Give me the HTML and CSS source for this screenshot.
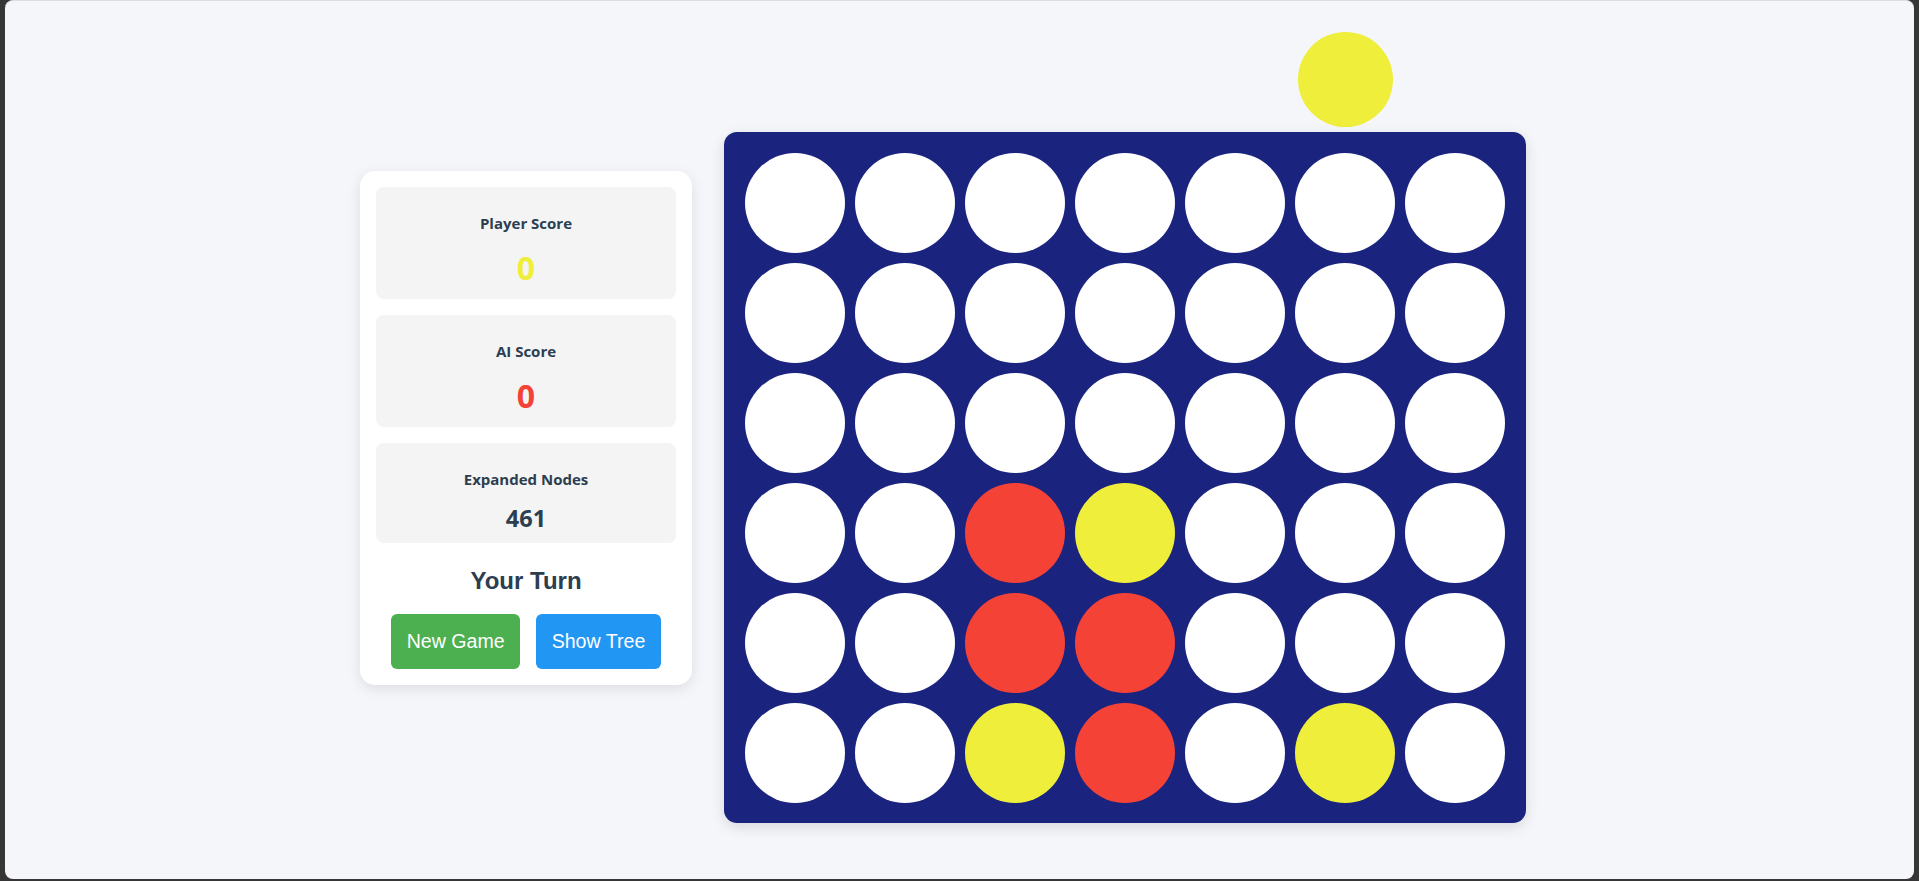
FILE: index.html
```html
<!DOCTYPE html>
<html lang="en">
<head>
<meta charset="utf-8">
<title>Connect Four</title>
<link rel="stylesheet" href="styles.css">
</head>
<body>
<div class="window">
  <main class="game">
    <aside class="panel">
      <div class="stat">
        <div class="stat-label">Player Score</div>
        <div class="stat-value score player">0</div>
      </div>
      <div class="stat">
        <div class="stat-label">AI Score</div>
        <div class="stat-value score ai">0</div>
      </div>
      <div class="stat">
        <div class="stat-label">Expanded Nodes</div>
        <div class="stat-value nodes">461</div>
      </div>
      <h2 class="turn">Your Turn</h2>
      <div class="buttons">
        <button class="btn btn-green">New Game</button>
        <button class="btn btn-blue">Show Tree</button>
      </div>
    </aside>
    <section class="board-wrap">
      <div class="hover-row">
        <span></span><span></span><span></span><span></span><span></span>
        <span class="hover-disc"></span>
        <span></span>
      </div>
      <div class="board">
        <div class="cell"></div><div class="cell"></div><div class="cell"></div><div class="cell"></div><div class="cell"></div><div class="cell"></div><div class="cell"></div>
        <div class="cell"></div><div class="cell"></div><div class="cell"></div><div class="cell"></div><div class="cell"></div><div class="cell"></div><div class="cell"></div>
        <div class="cell"></div><div class="cell"></div><div class="cell"></div><div class="cell"></div><div class="cell"></div><div class="cell"></div><div class="cell"></div>
        <div class="cell"></div><div class="cell"></div><div class="cell red"></div><div class="cell yellow"></div><div class="cell"></div><div class="cell"></div><div class="cell"></div>
        <div class="cell"></div><div class="cell"></div><div class="cell red"></div><div class="cell red"></div><div class="cell"></div><div class="cell"></div><div class="cell"></div>
        <div class="cell"></div><div class="cell"></div><div class="cell yellow"></div><div class="cell red"></div><div class="cell"></div><div class="cell yellow"></div><div class="cell"></div>
      </div>
    </section>
  </main>
</div>
</body>
</html>
```
FILE: styles.css
```css
* { box-sizing: border-box; }

html, body {
  margin: 0;
  height: 100%;
}

body {
  background: #363636;
  padding: 0 5px 2px 5px;
  font-family: "Open Sans", "Noto Sans", sans-serif;
  color: #2c3e50;
}

.window {
  height: 879px;
  background: #f5f6fa;
  border-top: 1px solid #dadde3;
  border-radius: 8px;
  overflow: hidden;
}

.game {
  height: 100%;
  display: flex;
  align-items: center;
  justify-content: center;
  gap: 32px;
  padding: 0 33px 26px 0;
}

/* ---------- Side panel ---------- */
.panel {
  width: 332px;
  margin-top: 2px;
  background: #ffffff;
  border-radius: 15px;
  padding: 16px;
  box-shadow: 0 4px 14px rgba(0, 0, 0, 0.1);
  display: flex;
  flex-direction: column;
  gap: 16px;
}

.stat {
  background: #f4f4f4;
  border-radius: 8px;
  padding: 26px 16px 12px;
  text-align: center;
}

.stat-label {
  font-size: 15px;
  font-weight: 700;
  line-height: 20px;
}

.stat-value {
  margin-top: 16px;
  font-weight: 700;
}

.score {
  font-size: 32px;
  line-height: 38px;
}

.player { color: #eeee3b; }
.ai { color: #f44336; }

.nodes {
  font-size: 23.5px;
  line-height: 26px;
  color: #2c3e50;
}

.turn {
  margin: 8px 0 3px;
  font-family: "Liberation Sans", Arial, sans-serif;
  font-size: 24px;
  line-height: 28px;
  font-weight: 700;
  text-align: center;
  color: #2c3e50;
}

.buttons {
  display: flex;
  justify-content: center;
  gap: 16px;
}

.btn {
  height: 55px;
  padding: 0 15.5px;
  border: none;
  border-radius: 6px;
  font-family: "Liberation Sans", Arial, sans-serif;
  font-size: 19.6px;
  color: #ffffff;
  cursor: pointer;
}

.btn-green { background: #4caf50; }
.btn-blue { background: #2196f3; }

/* ---------- Board ---------- */
.board-wrap {
  display: flex;
  flex-direction: column;
  width: 802px;
}

.hover-row {
  display: grid;
  grid-template-columns: repeat(7, 100px);
  column-gap: 10px;
  padding: 0 21px;
  height: 100px;
}

.hover-disc {
  width: 95px;
  height: 95px;
  border-radius: 50%;
  background: #eeee3b;
  justify-self: center;
}

.board {
  background: #1a237e;
  border-radius: 13px;
  padding: 21px 21px 20px;
  display: grid;
  grid-template-columns: repeat(7, 100px);
  grid-auto-rows: 100px;
  gap: 10px;
  box-shadow: 0 4px 14px rgba(0, 0, 0, 0.12);
}

.cell {
  width: 100px;
  height: 100px;
  border-radius: 50%;
  background: #ffffff;
}

.cell.red { background: #f44336; }
.cell.yellow { background: #eeee3b; }
```
